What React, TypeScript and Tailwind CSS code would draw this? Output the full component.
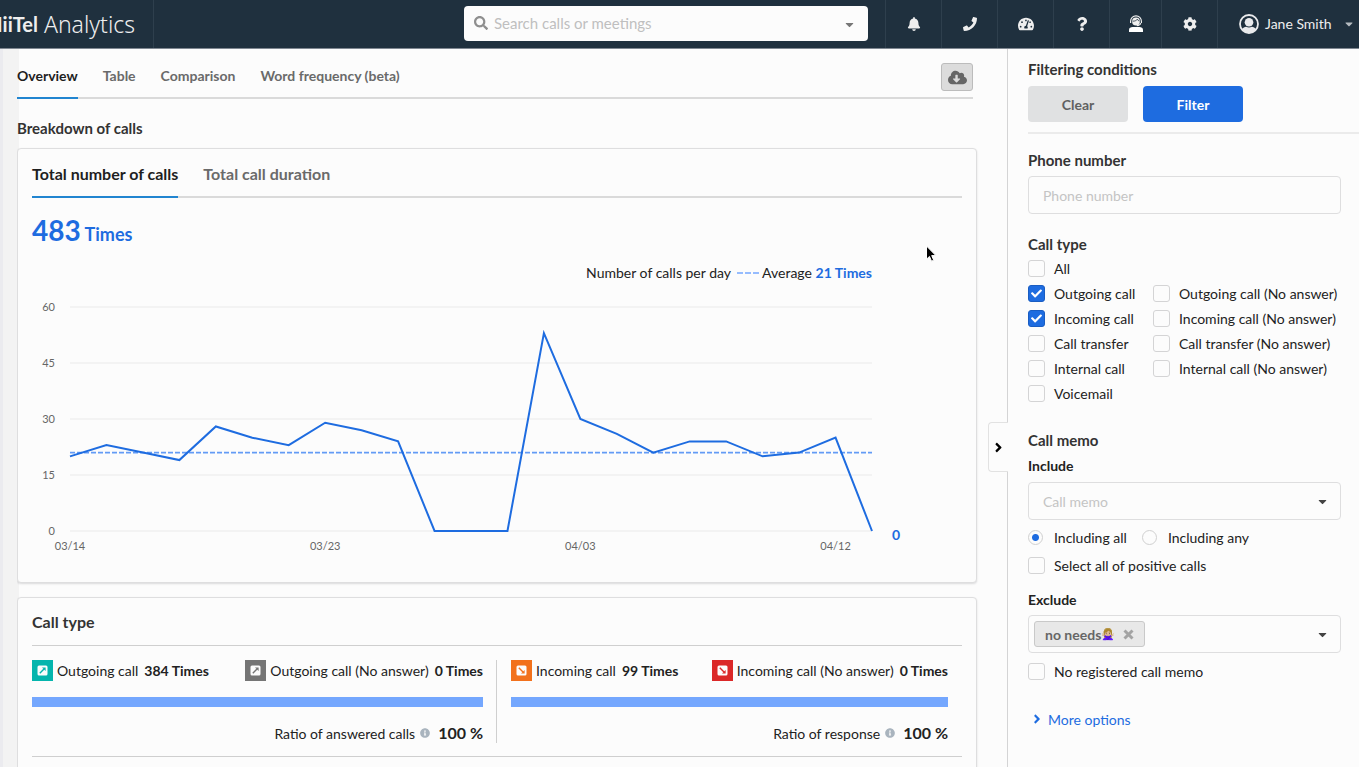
import React, { useState } from 'react';
import {
  FaAngleRight,
  FaBell,
  FaCaretDown,
  FaCheck,
  FaCloudDownloadAlt,
  FaCog,
  FaInfoCircle,
  FaPhone,
  FaQuestion,
  FaSearch,
  FaTachometerAlt,
} from 'react-icons/fa';

const callsPerDay = [20, 23, 21, 19, 28, 25, 23, 29, 27, 24, 0, 0, 0, 53, 30, 26, 21, 24, 24, 20, 21, 25, 0];
const averageCalls = 21;
const yTicks = [60, 45, 30, 15, 0];
const xTicks = [
  { index: 0, label: '03/14' },
  { index: 7, label: '03/23' },
  { index: 14, label: '04/03' },
  { index: 21, label: '04/12' },
];

const callTypes = [
  ['All'],
  ['Outgoing call', 'Outgoing call (No answer)'],
  ['Incoming call', 'Incoming call (No answer)'],
  ['Call transfer', 'Call transfer (No answer)'],
  ['Internal call', 'Internal call (No answer)'],
  ['Voicemail'],
];

const OperatorIcon = () => (
  <svg width="16" height="18" viewBox="0 0 16 18" fill="none" aria-hidden="true">
    <circle cx="8" cy="6.5" r="3.9" fill="#f0f0f0" />
    <path d="M2.6 8V6.2a5.4 5.4 0 0 1 10.8 0V8" stroke="#f0f0f0" strokeWidth="1.2" />
    <path d="M4.6 6.2c2.6 0 4-.8 4.8-2 .4 1 1 1.6 2 1.9" stroke="#1f303e" strokeWidth="0.8" />
    <path d="M12.8 8.2c-.4 1.6-1.8 2.4-4 2.4" stroke="#f0f0f0" strokeWidth="1.1" />
    <path d="M1 17v-2.2c0-1.9 1.6-2.8 3.6-2.8h6.8c2 0 3.6.9 3.6 2.8V17z" fill="#fff" />
  </svg>
);

const UserIcon = () => (
  <svg width="20" height="20" viewBox="0 0 20 20" fill="none" className="shrink-0" aria-hidden="true">
    <circle cx="10" cy="10" r="9" stroke="#e9eaec" strokeWidth="1.8" />
    <circle cx="10" cy="8.3" r="4.3" fill="#e9eaec" />
    <path d="M3 15.2c1-1.6 2.6-2.3 4.2-2.5.8.6 1.8.8 2.8.8s2-.2 2.8-.8c1.6.2 3.2.9 4.2 2.5A9 9 0 0 1 10 19a9 9 0 0 1-7-3.8z" fill="#e9eaec" />
  </svg>
);

const RemoveIcon = () => (
  <svg width="11" height="11" viewBox="0 0 11 11" aria-hidden="true">
    <path d="M1.5 1.5l8 8M9.500 1.500l-8 8" fill="none" stroke="currentColor" strokeWidth="3" />
  </svg>
);

const navItems = [
  { label: 'Notifications', width: 'w-14', icon: <FaBell size={14} /> },
  { label: 'Phone', width: 'w-14', icon: <FaPhone size={14} /> },
  { label: 'Dashboard', width: 'w-14', icon: <FaTachometerAlt size={16} /> },
  { label: 'Help', width: 'w-14', icon: <FaQuestion size={14} /> },
  { label: 'Operators', width: 'w-13', icon: <OperatorIcon /> },
  { label: 'Settings', width: 'w-14', icon: <FaCog size={14} /> },
];

const Header = () => (
  <header className="flex h-[49px] shrink-0 items-stretch border-b border-[#7f8791] bg-[#1f303e] text-[#eeeeee]">
    <div className="flex w-[154px] shrink-0 items-center justify-end overflow-hidden border-r border-[#2e3f4d] pr-[18px] whitespace-nowrap">
      <span className="text-xl font-bold">MiiTel</span>
      <span className="ml-[6px] font-['Noto_Sans'] text-[23px] font-light">Analytics</span>
    </div>
    <div className="flex flex-1 items-center justify-end pr-[17px] pb-0.5">
      <div className="relative w-[404px]">
        <FaSearch size={14} className="absolute top-[10px] left-[10px] text-[#8f8f8f]" />
        <input
          type="text"
          aria-label="Search calls or meetings"
          placeholder="Search calls or meetings"
          className="block h-[35px] w-full rounded bg-[#fcfcfc] pr-8 pl-[30px] text-[15px] text-[#222] placeholder:text-[#bfbfbf]"
        />
        <FaCaretDown size={13} className="absolute top-3 right-3 text-[#777]" />
      </div>
    </div>
    <nav className="flex">
      {navItems.map(item => (
        <button
          key={item.label}
          aria-label={item.label}
          className={`flex items-center justify-center border-l border-[#2e3f4d] ${item.width}`}
        >
          {item.icon}
        </button>
      ))}
      <button className="flex w-[142px] items-center border-l border-[#2e3f4d] pl-[21px] text-[14px] whitespace-nowrap">
        <UserIcon />
        <span className="ml-[6px] pb-0.5">Jane Smith</span>
        <FaCaretDown size={12} className="ml-[11px] shrink-0 text-[#b5bbc0]" />
      </button>
    </nav>
  </header>
);

interface TabsProps {
  items: string[];
  size: string;
  children?: React.ReactNode;
}

const Tabs: React.FC<TabsProps> = ({ items, size, children }) => {
  const [active, setActive] = useState(items[0]);

  return (
    <div className={`flex items-stretch border-b-2 border-[#dadada] font-bold ${size}`}>
      <div role="tablist" className="flex flex-1 gap-[25px]">
        {items.map(item => (
          <button
            key={item}
            role="tab"
            aria-selected={item === active}
            onClick={() => setActive(item)}
            className={`-mb-0.5 border-b-2 ${item === active ? 'border-[#2185d0] text-[#1f1f1f]' : 'border-transparent text-[#6a6a6a]'}`}
          >
            {item}
          </button>
        ))}
      </div>
      {children}
    </div>
  );
};

const CallsChart = () => {
  const left = 38;
  const right = 840;
  const top = 45;
  const bottom = 269;
  const x = (i: number) => left + (i * (right - left)) / (callsPerDay.length - 1);
  const y = (v: number) => bottom - (v * (bottom - top)) / 60;
  const points = callsPerDay.map((v, i) => `${x(i)},${y(v)}`).join(' ');

  return (
    <svg viewBox="0 0 930 304" className="block w-full" role="img" aria-label="Number of calls per day">
      <text x="699" y="16" textAnchor="end" fontSize="14" fill="#222">Number of calls per day</text>
      <line x1="705" x2="727" y1="11" y2="11" stroke="#74a7fe" strokeWidth="1.5" strokeDasharray="6 2" />
      <text x={right} y="16" textAnchor="end" fontSize="14" fill="#222">
        Average <tspan fill="#1e6ce0" fontWeight="700">21 Times</tspan>
      </text>
      {yTicks.map(tick => (
        <g key={tick}>
          <line x1={left} x2={right} y1={y(tick)} y2={y(tick)} stroke="#f1f1f1" strokeWidth="1.5" />
          <text x="23" y={y(tick) + 4} textAnchor="end" fontSize="11" fill="#666">{tick}</text>
        </g>
      ))}
      {xTicks.map(tick => (
        <text key={tick.label} x={x(tick.index)} y="288" textAnchor="middle" fontSize="11" fill="#666">{tick.label}</text>
      ))}
      <line x1={left} x2={right} y1={y(averageCalls)} y2={y(averageCalls)} stroke="#639bf5" strokeWidth="1.8" strokeDasharray="5 2" />
      <polyline points={points} fill="none" stroke="#1e6ce0" strokeWidth="2" />
      <text x="864" y="278" textAnchor="middle" fontSize="14" fontWeight="700" fill="#1e6ce0">0</text>
    </svg>
  );
};

interface CallCountProps {
  color: string;
  label: string;
  count: number;
  incoming?: boolean;
}

const CallCount: React.FC<CallCountProps> = ({ color, label, count, incoming = false }) => (
  <div className="flex items-center whitespace-nowrap">
    <span className={`flex size-[21px] items-center justify-center ${color}`}>
      <svg width="11" height="11" viewBox="0 0 11 11" className={incoming ? 'rotate-90' : ''} aria-hidden="true">
        <rect x="0.5" y="0.5" width="10" height="10" rx="1.5" fill="#fcfcfc" />
        <path d="M2.8 8.2L7 4" fill="none" stroke="currentColor" strokeWidth="1.4" />
        <path d="M5 2.4h3.6V6z" fill="currentColor" />
      </svg>
    </span>
    <span className="ml-1">{label}</span>
    <span className="ml-[6px] font-bold">{count} Times</span>
  </div>
);

interface CallGroupProps {
  ratioLabel: string;
  ratio: number;
  children: React.ReactNode;
}

const CallGroup: React.FC<CallGroupProps> = ({ ratioLabel, ratio, children }) => (
  <div className="px-[14px] first:border-r first:border-[#cfcfcf] first:pr-[13px] first:pl-0">
    <div className="flex items-center justify-between">{children}</div>
    <div className="mt-4 h-[10px] bg-[#e5e5e5]">
      <div className="h-full bg-[#74a7fe]" style={{ width: `${ratio}%` }} />
    </div>
    <div className="mt-4 flex h-5 items-center justify-end">
      <span>{ratioLabel}</span>
      <FaInfoCircle size={10} className="ml-[5px] text-[#a9b4be]" />
      <span className="ml-2 text-base font-bold">{ratio} %</span>
    </div>
  </div>
);

const Overview = () => (
  <main className="relative min-w-0 flex-1 overflow-hidden pr-[30px]">
    <div className="pr-1">
      <Tabs items={['Overview', 'Table', 'Comparison', 'Word frequency (beta)']} size="h-[50px] pt-1 text-[14px]">
        <button
          aria-label="Download"
          className="mt-[10px] flex h-7 w-8 items-center justify-center rounded-[3px] border border-[#bcbcbc] bg-[#dcdcdc] text-[#666]"
        >
          <FaCloudDownloadAlt size={19} />
        </button>
      </Tabs>
    </div>
    <h2 className="mt-[19px] text-[15px] leading-5 font-bold text-[#333]">Breakdown of calls</h2>

    <section className="mt-[10px] rounded border border-[#dededf] bg-[#fcfcfc] px-[14px] shadow-[0_1px_2px_rgba(34,36,38,0.15)]">
      <Tabs items={['Total number of calls', 'Total call duration']} size="h-[49px] pt-0.5 text-base" />
      <p className="mt-[14px] text-[18px] leading-9 font-bold text-[#1e6ce0]">
        <span className="text-[28px]">483</span> Times
      </p>
      <div className="mt-[10px] pb-4">
        <CallsChart />
      </div>
    </section>

    <section className="mt-[14px] rounded border border-[#dededf] bg-[#fcfcfc] px-[14px] shadow-[0_1px_2px_rgba(34,36,38,0.15)]">
      <h2 className="border-b border-[#cfcfcf] pt-3 pb-[11px] text-base leading-6 font-bold text-[#333]">Call type</h2>
      <div className="border-b border-[#cfcfcf] pt-[14px] pb-[13px] text-[14px] text-[#222]">
        <div className="grid grid-cols-2">
          <CallGroup ratioLabel="Ratio of answered calls" ratio={100}>
            <CallCount color="bg-[#05b5ad] text-[#05b5ad]" label="Outgoing call" count={384} />
            <CallCount color="bg-[#757575] text-[#757575]" label="Outgoing call (No answer)" count={0} />
          </CallGroup>
          <CallGroup ratioLabel="Ratio of response" ratio={100}>
            <CallCount color="bg-[#f2711c] text-[#f2711c]" label="Incoming call" count={99} incoming />
            <CallCount color="bg-[#db2828] text-[#db2828]" label="Incoming call (No answer)" count={0} incoming />
          </CallGroup>
        </div>
      </div>
      <div className="h-20" />
    </section>
  </main>
);

interface CheckboxProps {
  label: string;
  defaultChecked?: boolean;
}

const Checkbox: React.FC<CheckboxProps> = ({ label, defaultChecked = false }) => (
  <label className="flex h-[25px] items-center whitespace-nowrap">
    <span className="relative mr-[9px] size-[17px]">
      <input
        type="checkbox"
        defaultChecked={defaultChecked}
        className="peer block size-[17px] appearance-none rounded-[3px] border border-[#d4d4d5] bg-[#fcfcfc] checked:border-[#1a5dc2] checked:bg-[#1e6ce0]"
      />
      <FaCheck size={11} className="pointer-events-none absolute top-[3px] left-[3px] hidden text-white peer-checked:block" />
    </span>
    {label}
  </label>
);

const Radio: React.FC<CheckboxProps> = ({ label, defaultChecked = false }) => (
  <label className="flex h-[25px] items-center">
    <input
      type="radio"
      name="memo-match"
      defaultChecked={defaultChecked}
      className="mr-[11px] size-[15px] appearance-none rounded-full border border-[#d0d0d0] bg-[#fcfcfc] checked:bg-[radial-gradient(circle,#1e6ce0_3px,#fcfcfc_4px)]"
    />
    {label}
  </label>
);

const Filters = () => (
  <aside className="relative w-[352px] shrink-0 border-l border-[#d4d4d5] pl-5 text-[14px] text-[#222]">
    <button
      aria-label="Collapse filters"
      className="absolute top-[373px] -left-5 flex h-[50px] w-5 items-center justify-center rounded-l border border-r-0 border-[#e2e2e2] bg-[#fcfcfc] text-black"
    >
      <FaAngleRight size={15} />
    </button>

    <div className="border-b-2 border-[#ebebeb] pt-[10px] pb-[10px]">
      <h2 className="text-[15px] leading-5 font-bold text-[#333]">Filtering conditions</h2>
      <div className="mt-[7px] flex gap-[15px] font-bold">
        <button className="h-9 w-[100px] rounded bg-[#e0e1e2] text-[#5f6061]">Clear</button>
        <button className="h-9 w-[100px] rounded bg-[#1e6ce0] text-white">Filter</button>
      </div>
    </div>

    <div className="pr-[18px]">
      <label htmlFor="phone" className="mt-4 block text-[15px] leading-5 font-bold text-[#333]">Phone number</label>
      <input
        id="phone"
        type="text"
        placeholder="Phone number"
        className="mt-[6px] block h-[38px] w-full rounded border border-[#dededf] bg-[#fcfcfc] px-[14px] placeholder:text-[#c4c4c4]"
      />

      <fieldset className="mt-5">
        <legend className="text-[15px] leading-5 font-bold text-[#333]">Call type</legend>
        <div className="mt-[2px]">
          {callTypes.map(row => (
            <div key={row[0]} className="grid grid-cols-[125px_1fr]">
              {row.map(label => (
                <Checkbox key={label} label={label} defaultChecked={label === 'Outgoing call' || label === 'Incoming call'} />
              ))}
            </div>
          ))}
        </div>
      </fieldset>

      <h2 className="mt-6 text-[15px] leading-5 font-bold text-[#333]">Call memo</h2>
      <label htmlFor="include" className="mt-[6px] block leading-5 font-bold">Include</label>
      <div className="relative mt-[6px]">
        <select
          id="include"
          defaultValue=""
          className="block h-[38px] w-full appearance-none rounded border border-[#dededf] bg-[#fcfcfc] px-[14px] text-[#c4c4c4]"
        >
          <option value="">Call memo</option>
        </select>
        <FaCaretDown size={13} className="pointer-events-none absolute top-[13px] right-3 text-[#444]" />
      </div>
      <div className="mt-[5px] flex gap-[15px]">
        <Radio label="Including all" defaultChecked />
        <Radio label="Including any" />
      </div>
      <div className="mt-[3px]">
        <Checkbox label="Select all of positive calls" />
      </div>

      <h3 className="mt-3 leading-5 font-bold">Exclude</h3>
      <div className="mt-[5px] flex h-[38px] items-center justify-between rounded border border-[#dededf] pr-[11px] pl-[5px]">
        <span className="flex h-[26px] items-center rounded-[3px] border border-[#c9c9c9] bg-[#e8e8e8] px-[10px] font-bold text-[#666]">
          no needs<span className="text-[11px]">🙅🏼‍♀️</span>
          <button aria-label="Remove no needs" className="ml-2 text-[#a3a3a3]">
            <RemoveIcon />
          </button>
        </span>
        <button aria-label="Open exclude list" className="text-[#444]">
          <FaCaretDown size={13} />
        </button>
      </div>
      <div className="mt-[6px]">
        <Checkbox label="No registered call memo" />
      </div>

      <a href="#more" className="mt-[25px] flex h-5 items-center pl-[2px] text-[#1e6ce0]">
        <FaAngleRight size={14} className="mr-1" />
        More options
      </a>
    </div>
  </aside>
);

const App = () => (
  <div className="relative flex h-screen flex-col overflow-hidden bg-[#fcfcfc] font-[Lato,sans-serif]">
    <Header />
    <div className="flex min-h-0 flex-1">
      <div className="-mr-0.5 w-[19px] shrink-0 border-l-[3px] border-[#ebebef] bg-[#f3f3f3]" />
      <Overview />
      <Filters />
    </div>
    <svg width="12" height="18" viewBox="0 0 12 18" className="pointer-events-none absolute top-[245px] left-[925px]" aria-hidden="true">
      <path d="M1.5 1v13.2l3-2.8 2 4.8 2.2-1-2-4.6h4.2z" fill="#000" stroke="#fff" strokeWidth="1" />
    </svg>
  </div>
);

export default App;
